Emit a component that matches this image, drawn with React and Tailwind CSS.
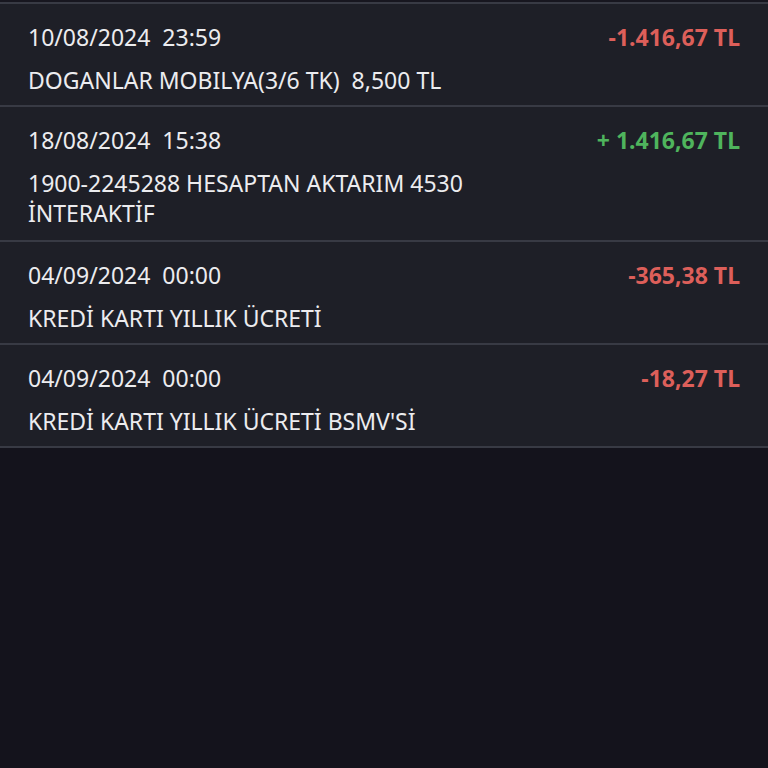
export default function App() {
  const rows = [
    { date: "10/08/2024  23:59", desc: ["DOGANLAR MOBILYA(3/6 TK)  8,500 TL"], amt: "-1.416,67 TL", pos: false },
    { date: "18/08/2024  15:38", desc: ["1900-2245288 HESAPTAN AKTARIM 4530", "İNTERAKTİF"], amt: "+ 1.416,67 TL", pos: true },
    { date: "04/09/2024  00:00", desc: ["KREDİ KARTI YILLIK ÜCRETİ"], amt: "-365,38 TL", pos: false },
    { date: "04/09/2024  00:00", desc: ["KREDİ KARTI YILLIK ÜCRETİ BSMV'Sİ"], amt: "-18,27 TL", pos: false },
  ];
  return (
    <div
      className="w-[768px] h-[768px] bg-[#14131c] overflow-hidden"
      style={{ fontFamily: '"Noto Sans", "Open Sans", sans-serif' }}
    >
      <div className="h-[2px] bg-[#17161f]" />
      <div className="border-t-2 border-[#383a44]">
        {rows.map((r, i) => (
          <div
            key={i}
            className={
              "bg-[#1e1f27] border-b-2 border-[#383a44] px-[28px] pt-[18px] " +
              (r.desc.length > 1 ? "pb-[12px]" : "pb-[10px]")
            }
          >
            <div className="flex justify-between items-center leading-[30px]">
              <span className="text-[23px] text-[#ececef] whitespace-pre">{r.date}</span>
              <span className={"text-[23px] font-bold " + (r.pos ? "text-[#4fb45d]" : "text-[#dd5f5a]")}>{r.amt}</span>
            </div>
            <div className="mt-[13px] text-[23px] leading-[30px] text-[#ececef] whitespace-pre">
              {r.desc.map((d, j) => (
                <div key={j}>{d}</div>
              ))}
            </div>
          </div>
        ))}
      </div>
    </div>
  );
}
